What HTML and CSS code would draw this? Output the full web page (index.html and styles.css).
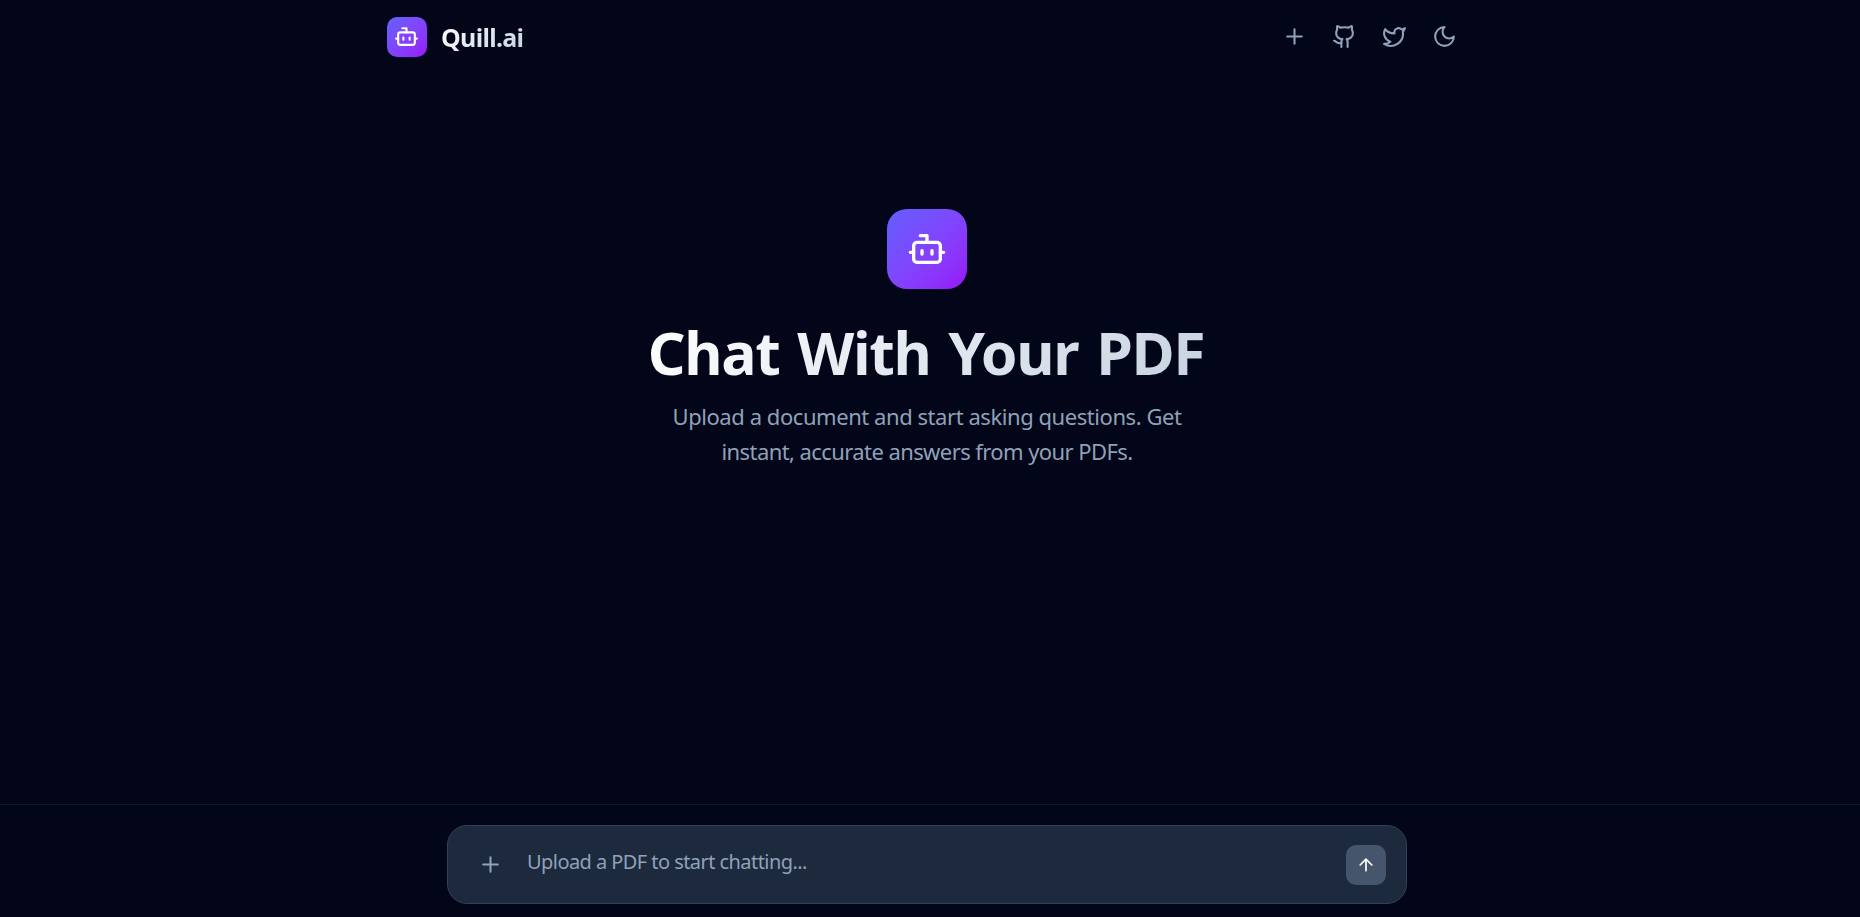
FILE: index.html
```html
<!DOCTYPE html>
<html lang="en">
<head>
<meta charset="utf-8">
<title>Quill.ai</title>
<link rel="stylesheet" href="styles.css">
</head>
<body>
<svg class="sprite" aria-hidden="true">
  <symbol id="bot" viewBox="0 0 24 24"><path d="M12 8V4H8"/><rect width="16" height="12" x="4" y="8" rx="2"/><path d="M2 14h2M20 14h2M15 13v2M9 13v2"/></symbol>
  <symbol id="plus" viewBox="0 0 24 24"><path d="M5 12h14M12 5v14"/></symbol>
</svg>
<div class="app">
  <header class="header">
    <div class="brand">
      <span class="tile tile-small"><svg class="icon"><use href="#bot"/></svg></span>
      <span class="brand-name">Quill.ai</span>
    </div>
    <nav class="actions">
      <button class="action" aria-label="New chat"><svg class="icon"><use href="#plus"/></svg></button>
      <button class="action" aria-label="GitHub"><svg class="icon" viewBox="0 0 24 24"><path d="M15 22v-4a4.800 4.800 0 0 0-1-3.500c3 0 6-2 6-5.500.08-1.250-.27-2.480-1-3.500.28-1.150.28-2.350 0-3.500 0 0-1 0-3 1.500-2.640-.5-5.360-.5-8 0C6 2 5 2 5 2c-.3 1.150-.3 2.350 0 3.500A5.403 5.403 0 0 0 4 9c0 3.500 3 5.500 6 5.500-.39.490-.68 1.050-.85 1.650-.17.6-.22 1.230-.15 1.850v4"/><path d="M9 18c-4.510 2-5-2-7-2"/></svg></button>
      <button class="action" aria-label="Twitter"><svg class="icon" viewBox="0 0 24 24"><path d="M22 4s-.7 2.100-2 3.400c1.600 10-9.400 17.300-18 11.600 2.200.1 4.400-.6 6-2C3 15.500.5 9.600 3 5c2.200 2.600 5.600 4.100 9 4-.9-4.200 4-6.600 7-3.800 1.100 0 3-1.200 3-1.200z"/></svg></button>
      <button class="action" aria-label="Toggle theme"><svg class="icon" viewBox="0 0 24 24"><path d="M12 3a6 6 0 0 0 9 9 9 9 0 1 1-9-9Z"/></svg></button>
    </nav>
  </header>
  <main class="hero">
    <span class="tile tile-large"><svg class="icon"><use href="#bot"/></svg></span>
    <h1 class="title">Chat With Your PDF</h1>
    <p class="subtitle"><span class="line-one">Upload a document and start asking questions. Get</span><br><span class="line-two">instant, accurate answers from your PDFs.</span></p>
  </main>
  <footer class="footer">
    <div class="composer">
      <button class="action" aria-label="Attach PDF"><svg class="icon"><use href="#plus"/></svg></button>
      <span class="placeholder">Upload a PDF to start chatting...</span>
      <button class="send" aria-label="Send"><svg class="icon" viewBox="0 0 24 24"><path d="m5 12 7-7 7 7M12 19V5"/></svg></button>
    </div>
  </footer>
</div>
</body>
</html>
```
FILE: styles.css
```css
* { box-sizing: border-box; }
body {
  margin: 0;
  background: #020618;
  color: #90a1b9;
  font-family: "Segoe UI", "Noto Sans", sans-serif;
}
button { border: 0; padding: 0; background: none; color: inherit; font: inherit; }
.sprite { position: absolute; width: 0; height: 0; }
.icon {
  display: block;
  width: 25px;
  height: 25px;
  fill: none;
  stroke: currentColor;
  stroke-width: 2;
  stroke-linecap: round;
  stroke-linejoin: round;
}
.app { height: 917px; display: flex; flex-direction: column; overflow: hidden; }
.header {
  width: 1080px;
  height: 74px;
  margin-left: 387px;
  display: flex;
  align-items: center;
  justify-content: space-between;
}
.brand { display: flex; align-items: center; gap: 14px; }
.tile {
  display: flex;
  align-items: center;
  justify-content: center;
  color: #fff;
  background: linear-gradient(135deg in oklab, #615fff, #9810fa);
}
.tile-small { width: 40px; height: 40px; padding: 0 1px 1px 0; border-radius: 10px; }
.tile-large { width: 80px; height: 80px; border-radius: 20px; }
.tile-large .icon { width: 40px; height: 40px; }
.brand-name, .title {
  color: transparent;
  background: linear-gradient(135deg in oklab, #fff, #e2e8f0 50%, #cad5e2 95%);
  -webkit-background-clip: text;
  background-clip: text;
  white-space: nowrap;
}
.brand-name { font-size: 25px; line-height: 35px; font-weight: 700; letter-spacing: -0.7px; }
.actions { display: flex; gap: 5px; margin-top: -1px; }
.action { width: 45px; height: 45px; display: flex; align-items: center; justify-content: center; }
.hero {
  flex: 1;
  width: 1080px;
  margin-left: 387px;
  padding-top: 135px;
  display: flex;
  flex-direction: column;
  align-items: center;
}
.title { margin: 26px 2px 0 0; font-size: 59px; line-height: 75px; font-weight: 700; letter-spacing: -1.4px; word-spacing: 4px; }
.subtitle { margin: 9px 0 0; font-size: 22px; line-height: 35px; text-align: center; white-space: nowrap; }
.line-one { letter-spacing: -0.44px; }
.line-two { letter-spacing: -0.58px; }
.footer { height: 113px; border-top: 1px solid #0f172b; padding-top: 20px; }
.composer {
  width: 960px;
  height: 79px;
  margin-left: 447px;
  padding: 0 20px;
  display: flex;
  align-items: center;
  background: #1d293d;
  border: 1px solid #314158;
  border-radius: 20px;
}
.placeholder { flex: 1; margin: -6px 0 0 14px; font-size: 20px; line-height: 30px; letter-spacing: -0.56px; white-space: nowrap; }
.send {
  width: 40px;
  height: 40px;
  display: flex;
  align-items: center;
  justify-content: center;
  border-radius: 10px;
  color: #fff;
  background: #45556c;
}
.send .icon { width: 20px; height: 20px; }
```
